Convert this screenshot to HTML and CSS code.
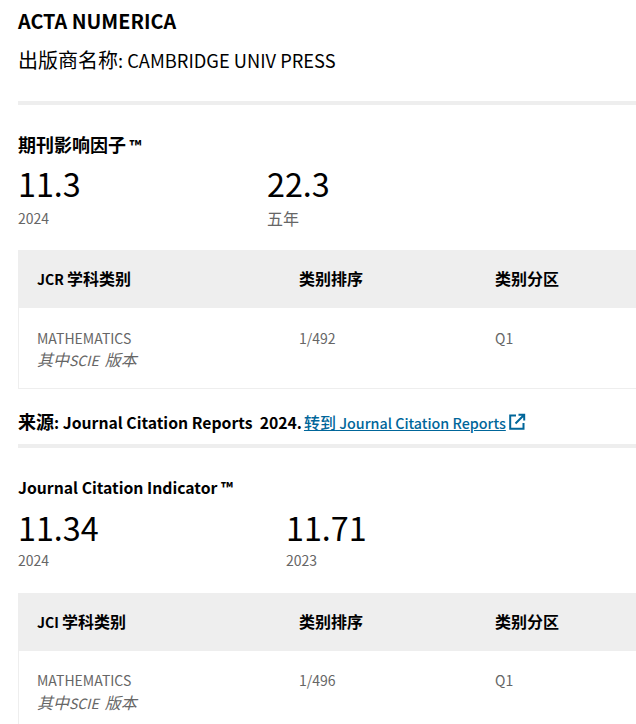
FILE: index.html
```html
<!DOCTYPE html>
<html lang="zh">
<head>
<meta charset="utf-8">
<title>ACTA NUMERICA</title>
<link rel="stylesheet" href="styles.css">
</head>
<body>
<main class="page">
  <h1 class="title">ACTA NUMERICA</h1>
  <p class="publisher"><span class="zh-lg">出版商名称</span>: CAMBRIDGE UNIV PRESS</p>
  <hr class="rule rule-top">

  <h2 class="heading heading-first"><span class="zh-md">期刊影响因子</span> ™</h2>
  <div class="metrics metrics-jif">
    <div class="metric"><div class="value">11.3</div><div class="year">2024</div></div>
    <div class="metric"><div class="value">22.3</div><div class="year"><span class="zh-sm">五年</span></div></div>
  </div>
  <div class="table">
    <div class="row head">
      <div class="cell c1">JCR <span class="zh-sm">学科类别</span></div>
      <div class="cell c2"><span class="zh-sm">类别排序</span></div>
      <div class="cell c3"><span class="zh-sm">类别分区</span></div>
    </div>
    <div class="row body">
      <div class="cell c1">MATHEMATICS<br><em class="edition"><span class="zh-sm">其中</span>SCIE <span class="zh-sm">版本</span></em></div>
      <div class="cell c2">1/492</div>
      <div class="cell c3">Q1</div>
    </div>
  </div>
  <p class="source"><b class="source-label"><span class="zh-md">来源</span>: Journal Citation Reports&nbsp; 2024.</b> <a class="link" href="#"><span class="zh-sm">转到</span> Journal Citation Reports</a><svg class="ext" viewBox="0 0 18 18" width="18" height="18" aria-hidden="true"><path d="M8 2.5H2.2v13.3h13.3V10M10.5 1.8h5.7v5.7M16 2 7.5 10.5" fill="none" stroke="#00669a" stroke-width="2"/></svg></p>
  <hr class="rule rule-mid">

  <h2 class="heading heading-second">Journal Citation Indicator ™</h2>
  <div class="metrics metrics-jci">
    <div class="metric"><div class="value">11.34</div><div class="year">2024</div></div>
    <div class="metric"><div class="value">11.71</div><div class="year">2023</div></div>
  </div>
  <div class="table table-open">
    <div class="row head">
      <div class="cell c1">JCI <span class="zh-sm">学科类别</span></div>
      <div class="cell c2"><span class="zh-sm">类别排序</span></div>
      <div class="cell c3"><span class="zh-sm">类别分区</span></div>
    </div>
    <div class="row body">
      <div class="cell c1">MATHEMATICS<br><em class="edition"><span class="zh-sm">其中</span>SCIE <span class="zh-sm">版本</span></em></div>
      <div class="cell c2">1/496</div>
      <div class="cell c3">Q1</div>
    </div>
  </div>
</main>
</body>
</html>
```

FILE: styles.css
```css
html, body {
  margin: 0;
  padding: 0;
  background: #fff;
  overflow: hidden;
  height: 724px;
}
.page {
  padding-left: 18px;
  font-family: "Noto Sans CJK SC", "Noto Sans", sans-serif;
  color: #000;
}
.zh-lg { font-size: 20px; }
.zh-md { font-size: 18px; }
.zh-sm { font-size: 16px; }
.title {
  margin: 0;
  padding-top: 7px;
  font-size: 19.8px;
  line-height: 28px;
  font-weight: 700;
}
.publisher {
  margin: 11px 0 0;
  font-size: 18.3px;
  line-height: 28px;
}
.rule {
  border: 0;
  height: 4px;
  background: #eeeeee;
  margin: 0;
}
.rule-top { margin-top: 27px; }
.rule-mid { margin-top: 9px; }
.heading {
  margin: 0;
  font-size: 15.75px;
  line-height: 24px;
  font-weight: 700;
}
.heading-first { margin-top: 27px; }
.heading-second { margin-top: 28px; }
.metrics {
  display: flex;
}
.metric {
  display: flex;
  flex-direction: column;
}
.metrics-jif { margin: 5px 0 21px; }
.metrics-jci { margin: 7px 0 23px; }
.metrics-jif .metric:first-child { width: 249px; }
.metrics-jci .metric:first-child { width: 268px; }
.value {
  font-size: 32.3px;
  line-height: 40px;
}
.year {
  font-size: 14px;
  line-height: 20px;
  color: #666;
  margin-top: 3px;
}
.metrics-jif .year { margin-top: 5px; }
.table {
  width: 640px;
  border-left: 1px solid #eee;
  border-bottom: 1px solid #eee;
}
.table-open { border-bottom: 0; }
.row {
  display: flex;
}
.head {
  box-sizing: border-box;
  height: 58px;
  margin-left: -1px;
  padding: 0 0 2px 1px;
  background: #eeeeee;
  align-items: center;
  font-size: 14px;
  font-weight: 700;
}
.body {
  height: 80px;
  padding-top: 20px;
  box-sizing: border-box;
  font-size: 14px;
  line-height: 20px;
  color: #666;
}
.table-open .body { padding-top: 19px; }
.cell { box-sizing: border-box; }
.c1 { width: 281px; padding-left: 19px; margin-left: -1px; }
.c2 { width: 196px; }
.c3 { flex: 1; }
.edition {
  font-style: italic;
  font-size: 14px;
  line-height: 22px;
  word-spacing: 3px;
}
.table-open .edition { line-height: 24px; }
.source {
  margin: 20px 0 0;
  font-size: 15.75px;
  line-height: 24px;
  display: flex;
  align-items: center;
  white-space: pre;
}
.source-label { font-weight: 700; }
.link {
  color: #00669a;
  font-size: 14.3px;
  font-weight: 500;
  text-decoration: underline;
  margin-left: 2px;
}
.ext { margin-left: 2px; }
```
